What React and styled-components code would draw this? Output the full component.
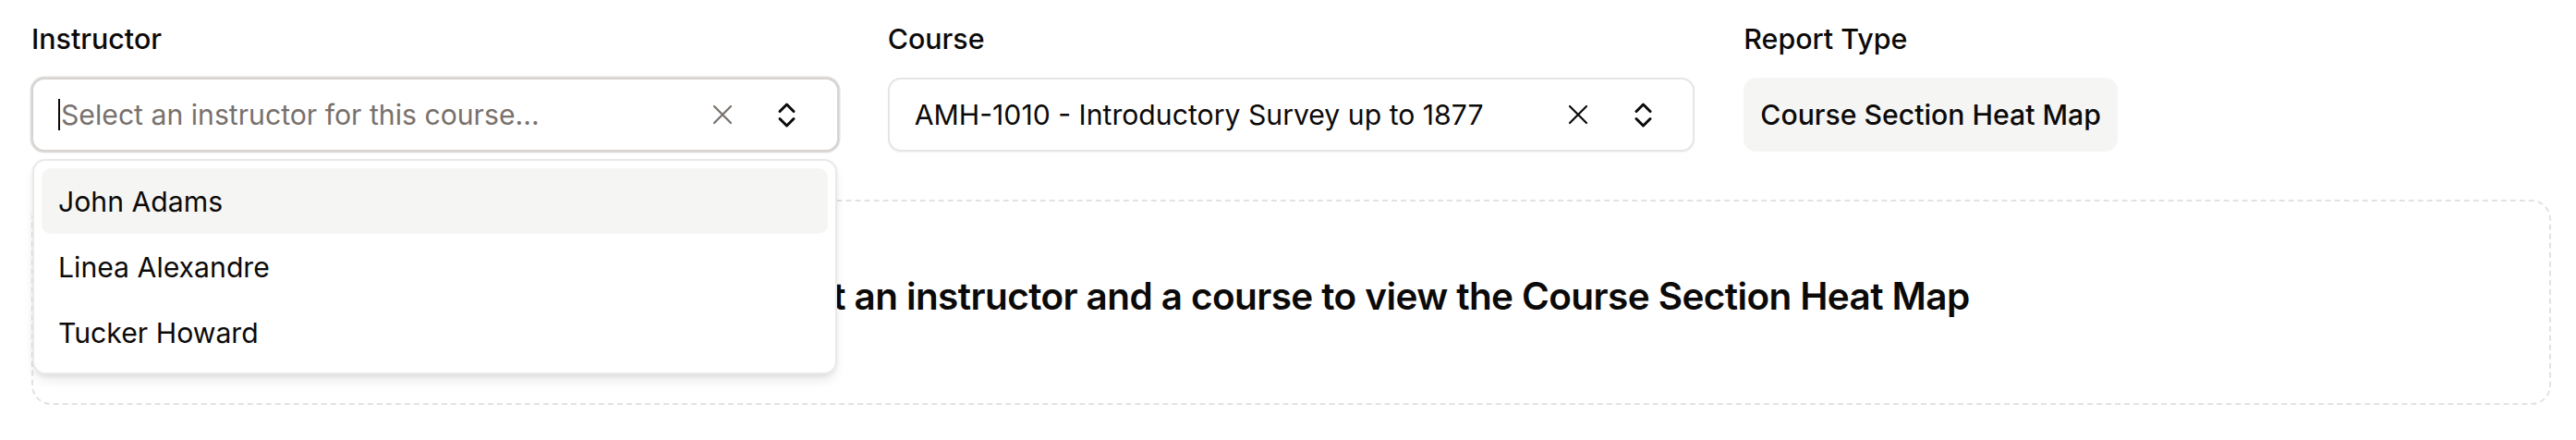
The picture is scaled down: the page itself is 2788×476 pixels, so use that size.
import styled, { createGlobalStyle } from "styled-components";

// global reset
const GlobalStyle = createGlobalStyle`
  body {
    margin: 0;
    background: #ffffff;
    color: #0c0a09;
    font-family: Inter, "Noto Sans", "Liberation Sans", sans-serif;
  }
`

const Page = styled.main`
  display: flex;
  flex-direction: column;
  gap: 52px;
  padding: 21px 27px 0 34px;
`

const Filters = styled.section`
  display: grid;
  grid-template-columns: repeat(3, 1fr);
  column-gap: 53px;
`

const Field = styled.div`
  display: flex;
  flex-direction: column;
  gap: 21px;
  align-items: stretch;
`

const Label = styled.label`
  font-size: 30.4px;
  line-height: 42px;
  font-weight: 500;
`

const SelectWrap = styled.div`
  position: relative;
`

const Control = styled.div`
  display: flex;
  align-items: center;
  height: 80px;
  box-sizing: border-box;
  padding: 0 26px 0 27px;
  border: 2px solid ${(p) => (p.$focused ? "#d6d3d1" : "#e7e5e4")};
  border-radius: 14px;
  background: #fff;
  box-shadow: ${(p) =>
    p.$focused ? "0 0 0 1.5px #e2e0de" : "0 1px 2px rgba(0, 0, 0, 0.05)"};
`

const Value = styled.div`
  flex: 1;
  display: flex;
  align-items: center;
  font-size: 30.2px;
  white-space: nowrap;
  overflow: hidden;
  color: ${(p) => (p.$placeholder ? "#78716c" : "#0c0a09")};
`

const Caret = styled.span`
  display: inline-block;
  width: 2px;
  height: 34px;
  background: #0c0a09;
  margin-right: 1px;
`

const IconButton = styled.button`
  display: flex;
  align-items: center;
  justify-content: center;
  width: 56px;
  height: 56px;
  padding: 0;
  border: none;
  background: transparent;
  color: ${(p) => p.$tone || "#0c0a09"};
  cursor: pointer;
`

const Icons = styled.div`
  display: flex;
  align-items: center;
  gap: 14px;
`

const Menu = styled.ul`
  position: absolute;
  top: calc(100% + 8px);
  left: 1px;
  right: 2px;
  z-index: 10;
  margin: 0;
  padding: 8px;
  list-style: none;
  background: #fff;
  border: 2px solid #ebe9e7;
  border-radius: 14px;
  box-shadow: 0 8px 14px -4px rgba(0, 0, 0, 0.12), 0 2px 4px rgba(0, 0, 0, 0.05);
`

const Option = styled.li`
  display: flex;
  align-items: center;
  height: 71px;
  padding: 0 18px;
  border-radius: 10px;
  font-size: 30.2px;
  background: ${(p) => (p.$active ? "#f5f5f4" : "transparent")};
`

const ReportButton = styled.button`
  align-self: flex-start;
  height: 80px;
  padding: 0 18px;
  border: none;
  border-radius: 14px;
  background: #f5f5f4;
  color: #0c0a09;
  font-family: inherit;
  font-size: 30.2px;
  font-weight: 500;
  cursor: pointer;
`

const EmptyState = styled.section`
  display: flex;
  align-items: center;
  justify-content: center;
  height: 222px;
  box-sizing: border-box;
  padding-bottom: 14px;
  border: 2px dashed #e4e2e0;
  border-radius: 21px;
`

const Heading = styled.h2`
  margin: 0;
  font-size: 40.5px;
  font-weight: 600;
  letter-spacing: -0.6px;
`

const XIcon = () => (
  <svg width="22" height="22" viewBox="0 0 22 22" fill="none">
    <path d="M2 2L20 20M20 2L2 20" stroke="currentColor" strokeWidth="2.2" strokeLinecap="round" />
  </svg>
)

const UpDownIcon = () => (
  <svg width="21" height="31" viewBox="0 0 21 31" fill="none">
    <path
      d="M3 11.5L10.5 4L18 11.5M3 19.5L10.5 27L18 19.5"
      stroke="currentColor"
      strokeWidth="3"
      strokeLinecap="round"
      strokeLinejoin="round"
    />
  </svg>
)

const instructors = ["John Adams", "Linea Alexandre", "Tucker Howard"];

function App() {
  return (
    <>
      <GlobalStyle />
      <Page>
        <Filters>
          <Field>
            <Label>Instructor</Label>
            <SelectWrap>
              <Control $focused>
                <Value $placeholder>
                  <Caret />
                  Select an instructor for this course...
                </Value>
                <Icons>
                  <IconButton $tone="#78716c" aria-label="Clear">
                    <XIcon />
                  </IconButton>
                  <IconButton aria-label="Toggle">
                    <UpDownIcon />
                  </IconButton>
                </Icons>
              </Control>
              <Menu>
                {instructors.map((name, i) => (
                  <Option key={name} $active={i === 0}>
                    {name}
                  </Option>
                ))}
              </Menu>
            </SelectWrap>
          </Field>
          <Field>
            <Label>Course</Label>
            <SelectWrap>
              <Control>
                <Value>AMH-1010 - Introductory Survey up to 1877</Value>
                <Icons>
                  <IconButton aria-label="Clear">
                    <XIcon />
                  </IconButton>
                  <IconButton aria-label="Toggle">
                    <UpDownIcon />
                  </IconButton>
                </Icons>
              </Control>
            </SelectWrap>
          </Field>
          <Field>
            <Label>Report Type</Label>
            <ReportButton>Course Section Heat Map</ReportButton>
          </Field>
        </Filters>
        <EmptyState>
          <Heading>
            Please select an instructor and a course to view the Course Section Heat Map
          </Heading>
        </EmptyState>
      </Page>
    </>
  );
}

export default App;
